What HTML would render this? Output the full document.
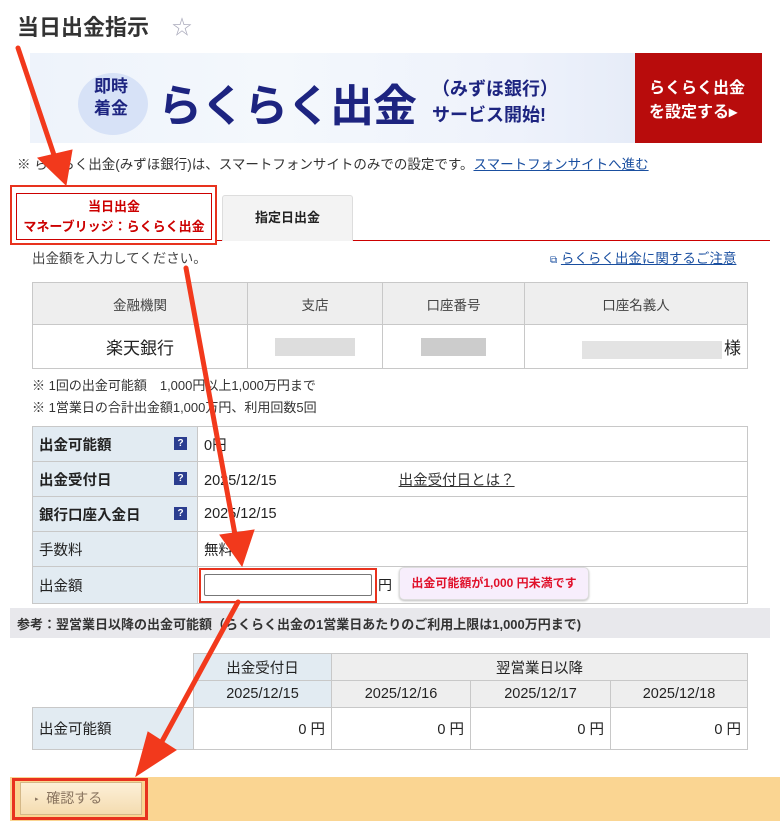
<!DOCTYPE html>
<html><head><meta charset="utf-8">
<style>
*{box-sizing:border-box;margin:0;padding:0}
body{width:780px;height:831px;background:#fff;font-family:"Liberation Sans","Noto Sans CJK JP",sans-serif;color:#222;position:relative;overflow:hidden;font-size:14px}
.abs{position:absolute}
table{border-collapse:collapse;position:absolute}
td,th{border:1px solid #c8c8c8;font-weight:normal}
a{color:#1a4fa0}
.q{float:right;margin-right:10px;background:#2b3d8f;color:#fff;font-size:10px;width:13px;height:13px;text-align:center;line-height:13px;margin-top:3px}
</style></head><body>
<div class="abs" style="left:17px;top:10px;font-size:22px;font-weight:bold;color:#333">当日出金指示</div>
<div class="abs" style="left:172px;top:11px;font-size:20px;color:#aab">☆</div>

<div class="abs" style="left:30px;top:53px;width:605px;height:90px;background:linear-gradient(90deg,#eef3fb,#f4f8fc 40%,#eef2fb 80%,#e6ecf8)"></div>
<div class="abs" style="left:78px;top:73px;width:70px;height:62px;border-radius:50%;background:#d7e2f7"></div>
<div class="abs" style="left:94px;top:76px;font-size:17px;font-weight:bold;color:#1d2480;line-height:22px">即時<br>着金</div>
<div class="abs" style="left:158px;top:70px;font-size:44px;font-weight:bold;color:#1d2480;letter-spacing:-1px;white-space:nowrap">らくらく出金</div>
<div class="abs" style="left:432px;top:76px;font-size:18px;font-weight:bold;color:#1d2480;line-height:26px;white-space:nowrap">（みずほ銀行）<br>サービス開始!</div>
<div class="abs" style="left:635px;top:53px;width:127px;height:90px;background:#b80c0c;color:#fff;font-weight:bold;font-size:16px;line-height:24px;padding:24px 0 0 14px">らくらく出金<br>を設定する▸</div>

<div class="abs" style="left:17px;top:153px;font-size:13.5px;color:#333">※ らくらく出金(みずほ銀行)は、スマートフォンサイトのみでの設定です。<a href="#" style="color:#1a4fa0">スマートフォンサイトへ進む</a></div>

<div class="abs" style="left:217px;top:240px;width:553px;height:1px;background:#c00"></div>
<div class="abs" style="left:222px;top:195px;width:131px;height:46px;background:#f3f3f3;border:1px solid #ddd;border-bottom:none;border-radius:3px 3px 0 0;text-align:center;line-height:44px;font-size:13px;font-weight:bold">指定日出金</div>
<div class="abs" style="left:10px;top:185px;width:207px;height:60px;border:2px solid #e8321e"></div>
<div class="abs" style="left:16px;top:193px;width:196px;height:47px;border:1px solid #c00;text-align:center;color:#c00;font-weight:bold;font-size:13px;line-height:20px;padding-top:3px">当日出金<br>マネーブリッジ：らくらく出金</div>

<div class="abs" style="left:32px;top:247px;font-size:13.5px;color:#444">出金額を入力してください。</div>
<div class="abs" style="left:550px;top:247px;font-size:13.5px"><span style="font-size:10px;color:#1a4fa0">⧉</span> <a href="#">らくらく出金に関するご注意</a></div>

<table style="left:32px;top:282px;width:716px;font-size:13.5px;text-align:center">
<tr style="height:42px;background:#eee;color:#444"><td style="width:215px">金融機関</td><td style="width:135px">支店</td><td style="width:142px">口座番号</td><td>口座名義人</td></tr>
<tr style="height:44px"><td style="font-size:17px">楽天銀行</td><td><span style="display:inline-block;width:80px;height:18px;background:#ddd;vertical-align:middle"></span></td><td><span style="display:inline-block;width:65px;height:18px;background:#ccc;vertical-align:middle"></span></td><td style="text-align:right;padding-right:6px;font-size:17px"><span style="display:inline-block;width:140px;height:18px;background:#e3e3e3;vertical-align:middle;margin-right:2px"></span>様</td></tr>
</table>

<div class="abs" style="left:32px;top:375px;font-size:13px;line-height:22px;color:#333">※ 1回の出金可能額　1,000円以上1,000万円まで<br>※ 1営業日の合計出金額1,000万円、利用回数5回</div>

<table style="left:32px;top:426px;width:716px;font-size:14.5px">
<tr style="height:35px"><td style="width:165px;background:#e2ebf2;padding-left:6px;font-weight:bold">出金可能額<span class="q">?</span></td><td style="padding-left:6px">0円</td></tr>
<tr style="height:35px"><td style="background:#e2ebf2;padding-left:6px;font-weight:bold">出金受付日<span class="q">?</span></td><td style="padding-left:6px">2025/12/15<span style="margin-left:122px;text-decoration:underline;color:#333">出金受付日とは？</span></td></tr>
<tr style="height:35px"><td style="background:#e2ebf2;padding-left:6px;font-weight:bold">銀行口座入金日<span class="q">?</span></td><td style="padding-left:6px">2025/12/15</td></tr>
<tr style="height:35px"><td style="background:#e2ebf2;padding-left:6px">手数料</td><td style="padding-left:6px">無料</td></tr>
<tr style="height:37px"><td style="background:#e2ebf2;padding-left:6px">出金額</td><td style="padding-left:6px"></td></tr>
</table>
<div class="abs" style="left:199px;top:568px;width:178px;height:35px;border:2px solid #e8321e"></div>
<div class="abs" style="left:204px;top:574px;width:168px;height:22px;border:1px solid #777;border-radius:2px;background:#fff"></div>
<div class="abs" style="left:378px;top:575px;font-size:14px">円</div>
<div class="abs" style="left:399px;top:567px;width:190px;height:33px;background:#f7eefc;border:1px solid #ddd;border-radius:5px;box-shadow:0 1px 2px #bbb;color:#e0102a;font-weight:bold;font-size:12px;text-align:center;line-height:31px">出金可能額が1,000 円未満です</div>

<div class="abs" style="left:10px;top:608px;width:760px;height:30px;background:#e8e8ec;font-size:13px;font-weight:bold;color:#333;padding:6px 0 0 7px">参考：翌営業日以降の出金可能額（らくらく出金の1営業日あたりのご利用上限は1,000万円まで)</div>

<table style="left:32px;top:653px;width:716px;font-size:14.5px;text-align:center">
<tr style="height:27px"><td style="border:none;width:161px"></td><td style="background:#e2ebf2;width:138px">出金受付日</td><td colspan="3" style="background:#eee">翌営業日以降</td></tr>
<tr style="height:27px"><td style="border:none;border-bottom:1px solid #c8c8c8"></td><td style="background:#e2ebf2">2025/12/15</td><td style="background:#eee;width:139px">2025/12/16</td><td style="background:#eee;width:140px">2025/12/17</td><td style="background:#eee">2025/12/18</td></tr>
<tr style="height:42px"><td style="background:#e2ebf2;text-align:left;padding-left:6px">出金可能額</td><td style="text-align:right;padding-right:6px">0 円</td><td style="text-align:right;padding-right:6px">0 円</td><td style="text-align:right;padding-right:6px">0 円</td><td style="text-align:right;padding-right:6px">0 円</td></tr>
</table>

<div class="abs" style="left:10px;top:777px;width:770px;height:44px;background:#fad592"></div>
<div class="abs" style="left:20px;top:782px;width:122px;height:33px;background:linear-gradient(#fdf0d8,#f4dcb0);border:1px solid #d4b888;color:#8a7560;font-size:14px;line-height:31px;padding-left:14px"><span style="font-size:7px;vertical-align:middle">▸</span>&nbsp; 確認する</div>
<div class="abs" style="left:12px;top:778px;width:136px;height:42px;border:3px solid #e8321e"></div>

<svg class="abs" style="left:0;top:0" width="780" height="831">
<g fill="#f2391c" stroke="#f2391c" stroke-width="5" stroke-linecap="round">
<line x1="18" y1="48" x2="55" y2="158"/>
<polygon points="38,158 72,150 66,185" stroke-width="1"/>
<line x1="186" y1="268" x2="236" y2="540"/>
<polygon points="220,535 254,530 242,566" stroke-width="1"/>
<line x1="238" y1="602" x2="160" y2="745"/>
<polygon points="148,732 176,750 136,776" stroke-width="1"/>
</g>
</svg>
</body></html>
